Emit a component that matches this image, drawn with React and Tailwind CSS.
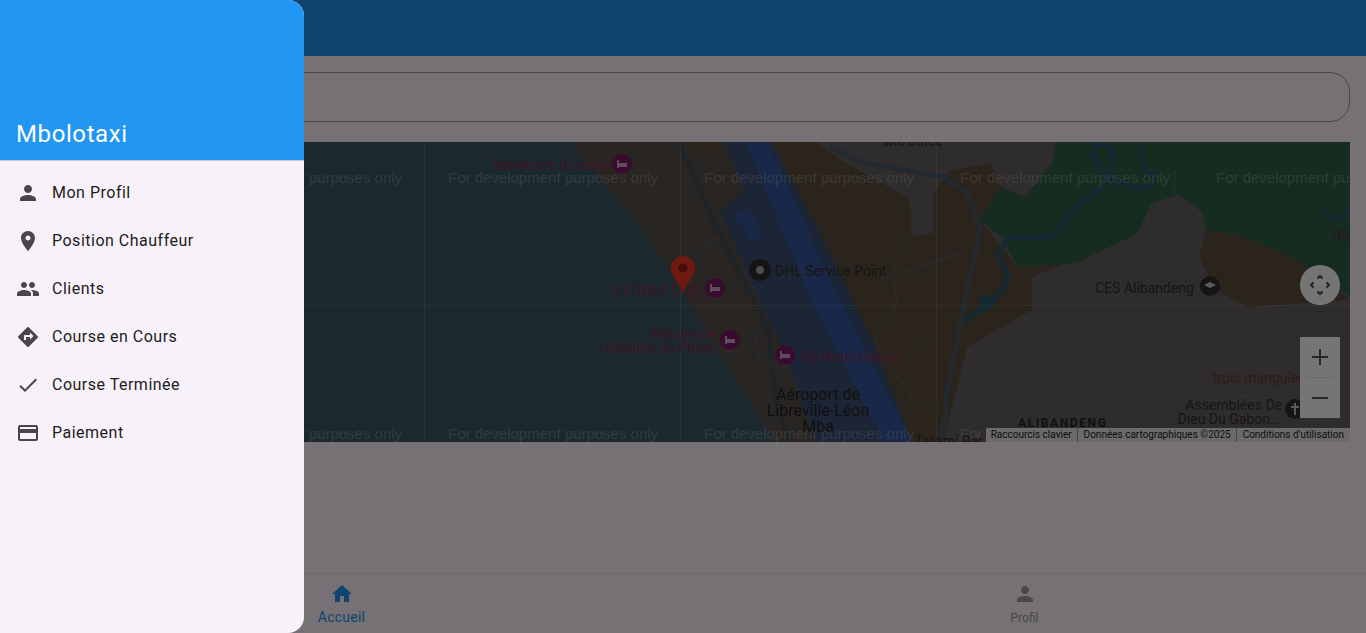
const menuItems = [
  {
    label: "Mon Profil",
    d: "M12 12c2.21 0 4-1.79 4-4s-1.79-4-4-4-4 1.79-4 4 1.79 4 4 4zm0 2c-2.67 0-8 1.34-8 4v2h16v-2c0-2.66-5.33-4-8-4z",
  },
  {
    label: "Position Chauffeur",
    d: "M12 2C8.13 2 5 5.13 5 9c0 5.25 7 13 7 13s7-7.75 7-13c0-3.87-3.13-7-7-7zm0 9.5c-1.38 0-2.5-1.12-2.5-2.5s1.12-2.5 2.5-2.5 2.5 1.12 2.5 2.5-1.12 2.5-2.5 2.5z",
  },
  {
    label: "Clients",
    d: "M16 11c1.66 0 2.99-1.34 2.99-3S17.66 5 16 5c-1.66 0-3 1.34-3 3s1.34 3 3 3zm-8 0c1.66 0 2.99-1.34 2.99-3S9.66 5 8 5C6.34 5 5 6.34 5 8s1.34 3 3 3zm0 2c-2.33 0-7 1.17-7 3.5V19h14v-2.5c0-2.33-4.67-3.5-7-3.5zm8 0c-.29 0-.62.02-.97.05 1.16.84 1.97 1.97 1.97 3.45V19h6v-2.5c0-2.33-4.67-3.5-7-3.5z",
  },
  {
    label: "Course en Cours",
    d: "M21.71 11.29l-9-9c-.39-.39-1.02-.39-1.41 0l-9 9c-.39.39-.39 1.02 0 1.41l9 9c.39.39 1.02.39 1.41 0l9-9c.39-.38.39-1.01 0-1.41zM14 14.5V12h-4v3H8v-4c0-.55.45-1 1-1h5V7.5l3.5 3.5-3.5 3.5z",
  },
  {
    label: "Course Terminée",
    d: "M9 16.17L4.83 12l-1.42 1.41L9 19 21 7l-1.41-1.41z",
  },
  {
    label: "Paiement",
    d: "M20 4H4c-1.11 0-1.99.89-1.99 2L2 18c0 1.11.89 2 2 2h16c1.11 0 2-.89 2-2V6c0-1.11-.89-2-2-2zm0 14H4v-6h16v6zm0-10H4V6h16v2z",
  },
];

const PERSON = menuItems[0].d;
const HOME = "M10 20v-6h4v6h5v-8h3L12 3 2 12h3v8z";

const Icon = ({ d, className }) => (
  <svg viewBox="0 0 24 24" className={className} fill="currentColor">
    <path d={d} />
  </svg>
);

const watermarks = [192, 448, 704, 960, 1216];

const HotelPin = ({ x, y }) => (
  <g>
    <path d={`M${x - 5} ${y + 8} L${x} ${y + 13} L${x + 5} ${y + 8} Z`} fill="#666062" />
    <circle cx={x} cy={y} r="10" fill="#7e1a6a" />
    <rect x={x - 5} y={y - 4} width="2" height="8" fill="#c8a8c0" />
    <rect x={x - 3} y={y - 1} width="8" height="4" fill="#c8a8c0" />
  </g>
);

const MapLabel = ({ x, y, anchor = "start", fill = "#8a2f52", size = 14, weight, spacing, children }) => (
  <text
    x={x}
    y={y}
    textAnchor={anchor}
    fill={fill}
    fontSize={size}
    fontWeight={weight}
    letterSpacing={spacing}
    fontFamily="Roboto, sans-serif"
  >
    {children}
  </text>
);

const MapView = () => (
  <div className="relative h-[300px] overflow-hidden bg-[#666062]">
    <svg viewBox="16 142 1334 300" className="block w-full h-full">
      {/* water */}
      <path d="M16 142H570L644 231L689 303L775 442H16Z" fill="#3b5b66" />
      {/* coast strip */}
      <path d="M570 142H724L744 190L720 213L758 297L782 347L816 442H775L689 303L644 231Z" fill="#5b514d" />
      {/* tan areas */}
      <path d="M689 142H727L713 157L699 158Z" fill="#5f5040" />
      <path d="M772 142H1056L1001 187L980 220L1018 267L1076 263L1138 233L1032 277L1032 310L967 347L943 442H912L874 343L830 253L817 227Z" fill="#5f5040" />
      <path d="M1206 230L1247 237L1302 263L1350 300L1247 307L1216 290L1199 257Z" fill="#5f5040" />
      <path d="M817 142H1056L1025 197L1001 187L991 163L950 170L933 193L933 233L912 236L909 198L840 160Z" fill="#666062" />
      {/* green */}
      <path d="M1056 142H1350V297L1302 263L1247 237L1206 230L1203 213L1179 195L1151 203L1138 233L1076 263L1018 267L1001 237L980 220L1001 187L1025 197L1052 163Z" fill="#336148" />
      {/* airport */}
      <path d="M724 142H772L817 227L830 253L874 343L912 442H816L782 347L758 297L720 213L744 190Z" fill="#3d5175" />
      <path d="M745 142H768L835 290L912 442H885L815 310Z" fill="#38579f" />
      <path d="M735 215L748 207L762 235L750 243Z" fill="#38579f" />
      {/* river */}
      <path
        d="M963 322L984 307L1001 293L1008 277L998 253L1008 238L1052 237L1076 207L1103 187L1112 167L1114 153C1108 142 1095 142 1093 150C1092 160 1110 183 1121 183C1130 188 1150 192 1155 180C1155 172 1147 172 1143 170L1141 142"
        fill="none"
        stroke="#2f5a70"
        strokeWidth="5"
      />
      <circle cx="987" cy="303" r="8" fill="#2f5a70" />
      {/* main roads */}
      <path d="M679 142L713 220L768 330L775 393L789 442" fill="none" stroke="#465054" strokeWidth="5" />
      <circle cx="767" cy="332" r="5" fill="#465054" />
      <path d="M830 147L864 163L943 177L967 193L980 230L967 290L946 397L943 442" fill="none" stroke="#4c5a66" strokeWidth="5" />
      {/* minor roads */}
      <g fill="none" stroke="#55606a" strokeWidth="1.2">
        <path d="M640 190L682 260L720 238L690 252" />
        <path d="M715 295L755 330L760 370" />
        <path d="M775 345L800 385M755 350L775 365" />
        <path d="M911 230C895 250 890 270 897 300C890 330 880 320 875 340C890 380 900 370 915 405" />
        <path d="M912 345L955 335M880 280L965 250L917 270L930 280" />
        <path d="M1010 345L1042 363L1069 330L1107 320L1125 345L1090 370L1045 400L1030 425" />
        <path d="M1042 363L1100 400L1140 425M1125 350L1175 385L1135 435" />
        <path d="M1175 170L1172 300L1182 340L1170 370L1135 400" />
        <path d="M1153 207L1192 214L1184 243L1150 240ZM1170 210L1164 242M1180 212L1174 243M1150 225L1192 230" />
        <path d="M1182 340L1245 320L1285 370L1315 385M1250 370L1315 350L1300 410" />
        <path d="M1160 412L1230 395L1350 380" />
      </g>
      <path d="M1325 210L1333 220L1342 220L1350 204" fill="none" stroke="#2f5a70" strokeWidth="4" />
      {/* grid */}
      <g stroke="#ffffff" strokeOpacity="0.12" strokeWidth="1">
        <path d="M424.5 142V442M680.5 142V442M936.5 142V442M16 305.5H1350" />
      </g>
      {/* watermark */}
      {watermarks.map((x) => (
        <g key={x} fill="#ffffff" fillOpacity="0.25" fontSize="15" fontFamily="'Liberation Sans', sans-serif">
          <text x={x} y="183">For development purposes only</text>
          <text x={x} y="439">For development purposes only</text>
        </g>
      ))}
      {/* labels */}
      <MapLabel x={491} y={170}>Residence Oceane</MapLabel>
      <MapLabel x={612} y={295}>L'ETOILE D'OR</MapLabel>
      <MapLabel x={715} y={339} anchor="end">Résidence</MapLabel>
      <MapLabel x={715} y={353} anchor="end">Hôtelière du Phare</MapLabel>
      <MapLabel x={801} y={362}>Fly Hotel Gabon</MapLabel>
      <MapLabel x={775} y={276} fill="#322e30">DHL Service Point</MapLabel>
      <MapLabel x={818} y={400} anchor="middle" fill="#262324" size={16}>Aéroport de</MapLabel>
      <MapLabel x={818} y={416} anchor="middle" fill="#262324" size={16}>Libreville-Léon</MapLabel>
      <MapLabel x={818} y={432} anchor="middle" fill="#262324" size={16}>Mba</MapLabel>
      <MapLabel x={882} y={146} fill="#322e30">site office</MapLabel>
      <MapLabel x={1095} y={293} fill="#322e30">CES Alibandeng</MapLabel>
      <MapLabel x={1213} y={383} fill="#6a3a30">trois manguiers</MapLabel>
      <MapLabel x={1282} y={410} anchor="end" fill="#322e30">Assemblées De</MapLabel>
      <MapLabel x={1281} y={424} anchor="end" fill="#322e30">Dieu Du Gabon...</MapLabel>
      <MapLabel x={1018} y={427} fill="#262324" size={12} weight="700" spacing="1.6">ALIBANDENG</MapLabel>
      <MapLabel x={915} y={446} fill="#322e30">Tatami Par</MapLabel>
      <MapLabel x={1333} y={241} fill="#5a3050">(Re</MapLabel>
      {/* pins */}
      <HotelPin x={622} y={164} />
      <HotelPin x={715} y={288} />
      <HotelPin x={730} y={340} />
      <HotelPin x={785} y={355} />
      <circle cx="760" cy="270" r="11" fill="#302c2e" />
      <circle cx="760" cy="270" r="4" fill="#a8a4a6" />
      <circle cx="1210" cy="286" r="10" fill="#302c2e" />
      <path d="M1204 285L1210 282L1216 285L1210 288Z" fill="#c8c4c6" />
      <circle cx="1295" cy="409" r="10" fill="#302c2e" />
      <path d="M1294 403H1296V415H1294ZM1291 406H1299V408H1291Z" fill="#c8c4c6" />
      {/* red marker */}
      <path d="M683 292C679 283 671 276 671 268C671 261 676 256 683 256C690 256 695 261 695 268C695 276 687 283 683 292Z" fill="#f03a28" />
      <circle cx="683" cy="268" r="4.5" fill="#a01a10" />
    </svg>

    {/* move control */}
    <div className="absolute left-[1284px] top-[123px] w-10 h-10 rounded-full bg-white flex items-center justify-center text-[#444]">
      <svg viewBox="0 0 24 24" className="w-6 h-6" fill="none" stroke="currentColor" strokeWidth="2">
        <path d="M9.5 5.5L12 3L14.5 5.5M9.5 18.5L12 21L14.5 18.5M5.5 9.5L3 12L5.5 14.5M18.5 9.5L21 12L18.5 14.5" />
      </svg>
    </div>

    {/* zoom control */}
    <div className="absolute left-[1284px] top-[195px] w-10 h-[81px] bg-white flex flex-col items-center text-[#555]">
      <div className="h-10 w-full flex items-center justify-center">
        <svg viewBox="0 0 18 18" className="w-[18px] h-[18px]" fill="currentColor">
          <path d="M8 1h2v7h7v2h-7v7H8v-7H1V8h7z" />
        </svg>
      </div>
      <div className="h-px w-[30px] bg-[#e6e6e6]" />
      <div className="h-10 w-full flex items-center justify-center">
        <svg viewBox="0 0 18 18" className="w-[18px] h-[18px]" fill="currentColor">
          <path d="M1 8h16v2H1z" />
        </svg>
      </div>
    </div>

    {/* attribution */}
    <div className="absolute right-0 bottom-0 h-[14px] flex items-center bg-[#e8e8e8] text-[10px] text-[#222] font-['Roboto',sans-serif] leading-none">
      <span className="px-[5px] border-r border-[#999] h-full flex items-center">Raccourcis clavier</span>
      <span className="pl-[6px] pr-[5px] border-r border-[#999] h-full flex items-center">Données cartographiques ©2025</span>
      <span className="px-[6px] h-full flex items-center">Conditions d'utilisation</span>
    </div>
  </div>
);

const Drawer = () => (
  <aside className="absolute left-0 top-0 bottom-0 w-[304px] bg-[#f7f2fa] rounded-r-2xl overflow-hidden">
    <div className="h-[161px] bg-[#2196f3] border-b border-[#cac4d0] flex items-end px-4 pb-[10px]">
      <h1 className="text-2xl leading-8 tracking-[0.6px] text-white">Mbolotaxi</h1>
    </div>
    <ul className="py-2">
      {menuItems.map((item) => (
        <li key={item.label} className="h-12 flex items-center pl-4 gap-3">
          <Icon d={item.d} className="w-6 h-6 text-[#49454f]" />
          <span className="text-base tracking-[0.5px] text-[#1d1b20]">{item.label}</span>
        </li>
      ))}
    </ul>
  </aside>
);

const App = () => {
  return (
    <div className="relative h-[633px] overflow-hidden bg-[#fef7ff] flex flex-col font-['Roboto',sans-serif]">
      <header className="h-14 bg-[#2196f3]" />
      <main className="flex-1 p-4 flex flex-col gap-5">
        <div className="h-[50px] rounded-[20px] border border-[#9f99a3]" />
        <MapView />
      </main>
      <nav className="h-[60px] border-t border-[#e8e2ea] flex">
        <div className="flex-1 flex flex-col items-center pt-2 text-[#2196f3]">
          <Icon d={HOME} className="w-6 h-6" />
          <span className="text-sm leading-5 mt-px tracking-[0.25px]">Accueil</span>
        </div>
        <div className="flex-1 flex flex-col items-center pt-2 text-[#9e9e9e]">
          <Icon d={PERSON} className="w-6 h-6" />
          <span className="text-xs leading-4 mt-1">Profil</span>
        </div>
      </nav>

      <div className="absolute inset-0 bg-black/[0.54]" />
      <Drawer />
    </div>
  );
};

export default App;
